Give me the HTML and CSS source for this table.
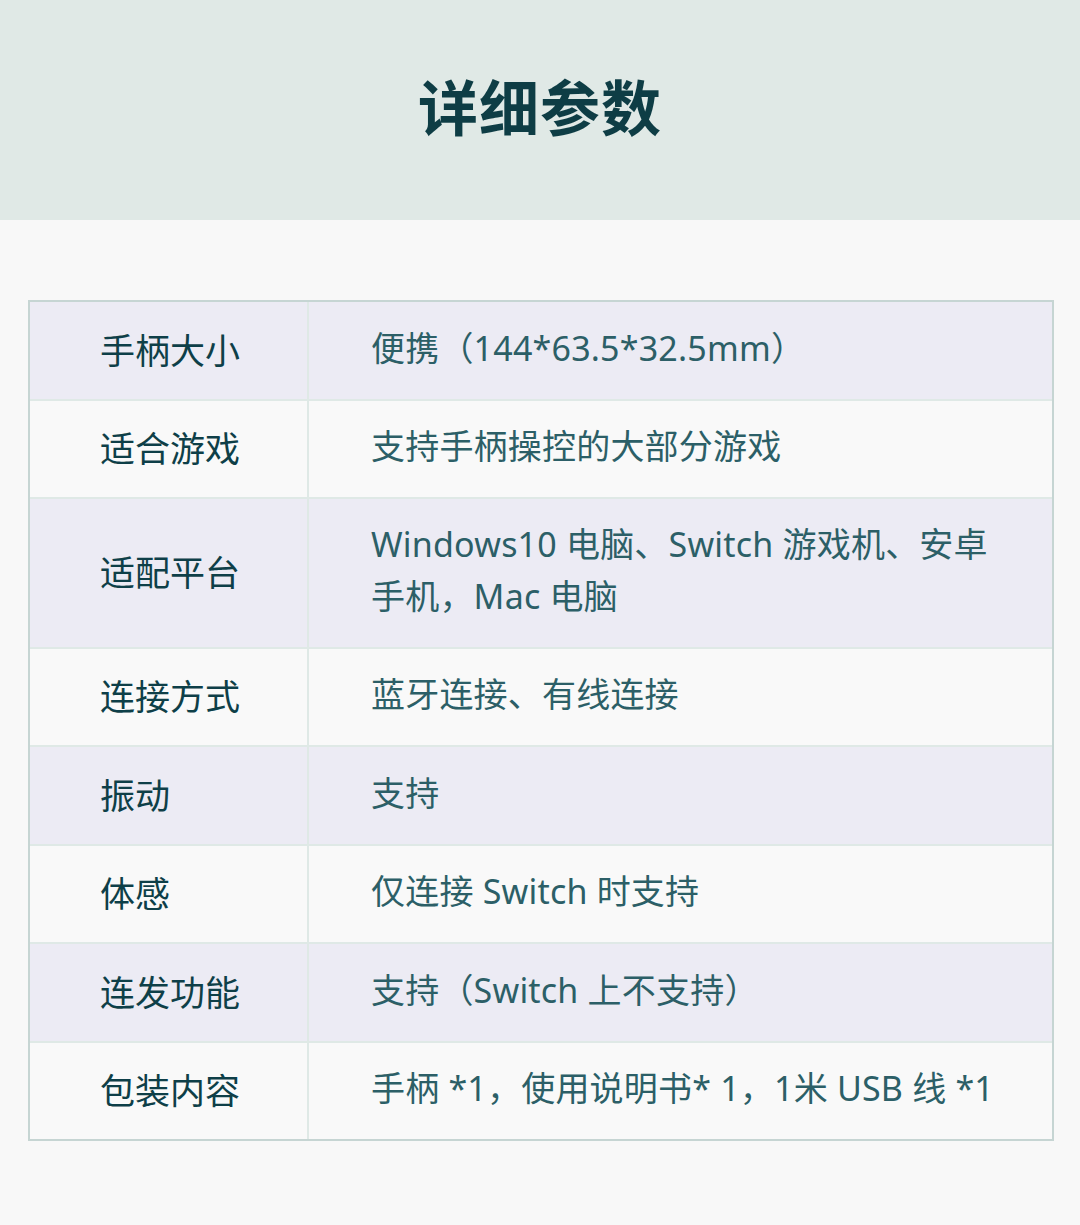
FILE: index.html
```html
<!DOCTYPE html>
<html lang="zh-CN">
<head>
<meta charset="utf-8">
<link rel="stylesheet" href="styles.css">
</head>
<body>
<header class="banner"><h1 class="title">详细参数</h1></header>
<main class="content">
  <div class="spec">
    <div class="row alt"><div class="label">手柄大小</div><div class="value">便携（144*63.5*32.5mm）</div></div>
    <div class="row"><div class="label">适合游戏</div><div class="value">支持手柄操控的大部分游戏</div></div>
    <div class="row alt tall"><div class="label">适配平台</div><div class="value">Windows10 电脑、Switch 游戏机、安卓手机，Mac 电脑</div></div>
    <div class="row"><div class="label">连接方式</div><div class="value">蓝牙连接、有线连接</div></div>
    <div class="row alt"><div class="label">振动</div><div class="value">支持</div></div>
    <div class="row"><div class="label">体感</div><div class="value">仅连接 Switch 时支持</div></div>
    <div class="row alt"><div class="label">连发功能</div><div class="value">支持（Switch 上不支持）</div></div>
    <div class="row last"><div class="label">包装内容</div><div class="value">手柄 *1，使用说明书* 1，1米 USB 线 *1</div></div>
  </div>
</main>
</body>
</html>
```
FILE: styles.css
```css
html, body {
  margin: 0;
  padding: 0;
  background: #f8f8f8;
  font-family: "Noto Sans CJK SC", "Noto Sans", sans-serif;
}
.banner {
  height: 220px;
  background: #e0e9e6;
  display: flex;
  align-items: center;
  justify-content: center;
}
.title {
  margin: 0;
  font-size: 60px;
  font-weight: 700;
  color: #0e3d45;
  letter-spacing: 1px;
  line-height: 1;
  padding-bottom: 10px;
}
.content {
  padding: 80px 26px 0 28px;
}
.spec {
  border: 2px solid #c6d5d3;
  background: #f9f9f9;
}
.row {
  display: grid;
  grid-template-columns: 279px 1fr;
  min-height: 98px;
  border-bottom: 2px solid #dfe9e6;
  box-sizing: border-box;
  color: #0e3f48;
}
.row.alt {
  background: #ecebf4;
  min-height: 99px;
}
.row.last {
  border-bottom: none;
  min-height: 96px;
}
.row.tall {
  min-height: 150px;
}
.label {
  display: flex;
  align-items: center;
  padding: 0 0 5px 70px;
  border-right: 2px solid #dfe9e6;
  color: #0e3f48;
  font-size: 35px;
}
.value {
  display: flex;
  align-items: center;
  padding: 0 40px 6px 62px;
  color: #2c5f67;
  font-family: "Noto Sans", "Noto Sans CJK SC", sans-serif;
  font-size: 34px;
  letter-spacing: 0.2px;
  line-height: 52px;
}
```
